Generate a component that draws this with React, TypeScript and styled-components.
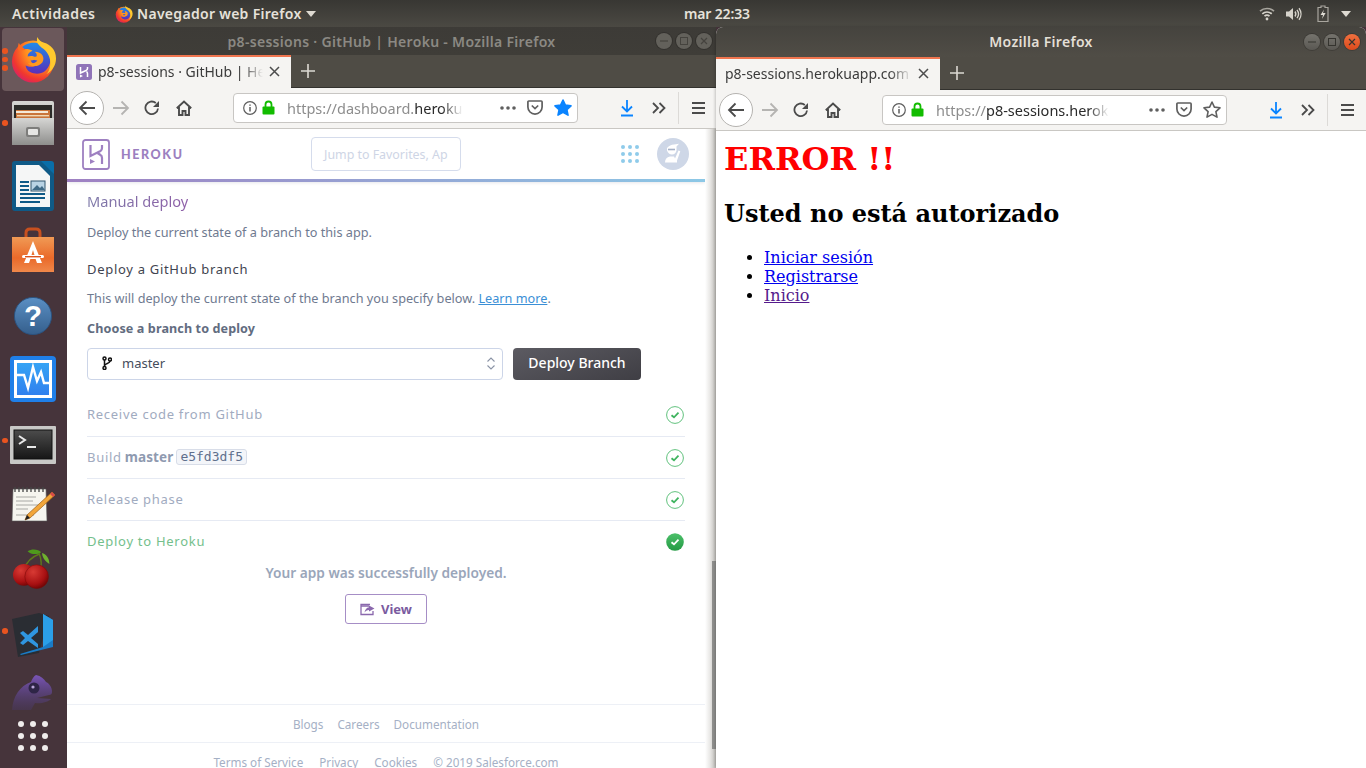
import React from "react";
import styled, { createGlobalStyle } from "styled-components";

const Global = createGlobalStyle`
  html, body { margin: 0; padding: 0; background: #46343b; overflow: hidden; }
  * { box-sizing: border-box; }
`;

const UI = `"Noto Sans", "Open Sans", sans-serif`;
const WEB = `"Noto Sans", "Open Sans", sans-serif`;

const Desktop = styled.div`
  width: 1366px; height: 768px; display: flex; flex-direction: column; overflow: hidden;
  font-family: ${UI}; background: #46343b;
`;
const TopBar = styled.header`
  height: 27px; flex: none; display: grid; grid-template-columns: 684px auto 1fr; align-items: center;
  background: linear-gradient(#383733, #4b4943); color: #e6e2da; font-size: 14px; font-weight: 600;
`;
const TopLeft = styled.div`display: flex; align-items: center; padding-left: 12px;`;
const Activities = styled.span`width: 103px; letter-spacing: .45px;`;
const AppMenu = styled.span`display: flex; align-items: center; gap: 4px; letter-spacing: .3px;`;
const Clock = styled.span`letter-spacing: -.15px;`;
const TopRight = styled.div`display: flex; align-items: center; justify-content: flex-end; padding-right: 15px;`;
const Spacer = styled.span<{ $w: number }>`width: ${p => p.$w}px; flex: none;`;

const Main = styled.div`flex: 1; min-height: 0; display: flex;`;
const Dock = styled.nav`
  width: 67px; flex: none; display: flex; flex-direction: column; background: #46343b; padding-left: 2px;
`;
const DockItem = styled.div<{ $active?: boolean; $dy?: number }>`
  position: relative; width: 62px; height: ${p => (p.$active ? 63 : 63.5)}px; flex: none; display: flex; align-items: center; justify-content: center;
  border-radius: 4px; background: ${p => (p.$active ? "#6b585b" : "transparent")};
  margin-top: ${p => (p.$active ? 1 : 0)}px;
  & > svg { margin-top: ${p => (p.$dy ?? 0) * 2}px; }
`;
const DockGrid = styled(DockItem)`height: 20px; margin-top: 0;`;
const Pips = styled.span`
  position: absolute; left: 0; top: 0; bottom: 0; width: 6px; display: flex; flex-direction: column; align-items: center; justify-content: center; gap: 3px;
`;
const Pip = styled.i`display: block; width: 5.5px; height: 5.5px; border-radius: 50%; background: #e95420;`;

const LeftWindow = styled.section`
  width: 649px; flex: none; display: flex; flex-direction: column; background: #fff; min-height: 0;
`;
const RightWindow = styled.section`
  width: 650px; flex: none; display: flex; flex-direction: column; background: #fff; border-radius: 7px 7px 0 0; overflow: hidden; min-height: 0;
  box-shadow: -1px 0 3px rgba(0,0,0,.2); position: relative;
`;
const TitleBar = styled.div<{ $focused?: boolean }>`
  height: ${p => (p.$focused ? 30 : 28)}px; flex: none; position: relative; display: flex; align-items: center; justify-content: center;
  padding-bottom: ${p => (p.$focused ? 2 : 0)}px;
  background: ${p => (p.$focused ? "linear-gradient(#45433e, #504d46)" : "linear-gradient(#3d3b37, #3f3d38)")};
  color: ${p => (p.$focused ? "#e3dfd6" : "#8b8983")}; font-size: 14px; font-weight: 600; letter-spacing: .3px;
`;
const WinButtons = styled.div<{ $right: number }>`position: absolute; right: ${p => p.$right}px; top: 50%; transform: translateY(-50%); display: flex; gap: 4px;`;
const WinButton = styled.span<{ $close?: boolean; $dim?: boolean }>`
  width: 16px; height: 16px; border-radius: 50%; display: flex; align-items: center; justify-content: center;
  background: ${p => (p.$close ? "linear-gradient(#f0703f, #dc4a1c)" : p.$dim ? "#63615b" : "linear-gradient(#75736d, #5a5853)")};
  box-shadow: 0 0 0 1px rgba(0,0,0,.18);
`;
const TabStrip = styled.div`height: 33px; flex: none; display: flex; align-items: stretch; background: #4f4c45; border-bottom: 1px solid #33322e;`;
const Tab = styled.div`
  width: 224px; flex: none; display: flex; align-items: center; padding: 0 11px 2px 9px; gap: 6px; background: #f5f4f2; border-top: 2px solid #f0754f;
  font-size: 14px; color: #3b3b3b; margin-bottom: -1px;
`;
const TabLabel = styled.span`
  flex: 1; min-width: 0; white-space: nowrap;
  -webkit-mask-image: linear-gradient(90deg, #000 88%, transparent); mask-image: linear-gradient(90deg, #000 88%, transparent);
`;
const NewTab = styled.span`width: 34px; display: flex; align-items: center; justify-content: center;`;
const Toolbar = styled.div`
  height: 41px; flex: none; display: flex; align-items: center; background: #f5f4f2; border-bottom: 1px solid #c9c7c3; position: relative;
`;
const BackButton = styled.span`
  width: 34px; height: 34px; border-radius: 50%; margin-left: 3px; border: 1px solid #b5b3b0; background: #fff; display: flex; align-items: center; justify-content: center; flex: none;
`;
const ToolIcon = styled.span<{ $w: number }>`width: ${p => p.$w}px; flex: none; display: flex; align-items: center; justify-content: center;`;
const UrlBar = styled.div`
  width: 345px; height: 30px; flex: none; margin-left: 31px; margin-top: -1px; display: flex; align-items: center; background: #fff; border: 1px solid #c8c6c3; border-radius: 4px; padding-left: 9px;
`;
const UrlText = styled.span`
  margin-left: 12px; flex: none; white-space: nowrap; font-size: 14.5px; color: #8d8d8d;
  -webkit-mask-image: linear-gradient(90deg, #000 88%, transparent); mask-image: linear-gradient(90deg, #000 88%, transparent);
  b { font-weight: 400; color: #2b2b2b; }
`;
const UrlActions = styled.span`flex: 1; display: flex; align-items: center; justify-content: flex-end; gap: 11px; padding-right: 5px;`;
const ToolEnd = styled.div`flex: 1; display: flex; align-items: center; padding-left: 34px;`;
const Sep = styled.span`width: 1px; height: 32px; background: #dcdad7; margin-left: 2px;`;

const ContentRow = styled.div`flex: 1; min-height: 0; display: flex;`;
const Viewport = styled.div`width: 638px; flex: none; display: flex; flex-direction: column; overflow: hidden; background: #fff; font-family: ${WEB};`;
const ScrollStrip = styled.div`
  width: 11px; flex: none; position: relative; background: linear-gradient(90deg, #fff, #e9e8e6 45%, #bdbbb7);
`;
const ScrollThumb = styled.i`position: absolute; right: 0; top: 432px; width: 4px; height: 188px; background: #8f8f8d;`;

const HerokuHeader = styled.div`
  height: 53px; flex: none; display: flex; align-items: center; padding: 0 16px 0 15px; background: #fff; position: relative;
  border-bottom: 3px solid; border-image: linear-gradient(90deg, #9f80c2, #8cc8e6) 1;
  box-shadow: 0 1px 3px rgba(60,60,90,.12);
`;
const Brand = styled.span`font-family: "Lato", ${WEB}; font-size: 12.5px; font-weight: 900; letter-spacing: 1.6px; color: #9c7fc0; margin-left: 11px; width: 190px;`;
const SearchBox = styled.div`
  width: 150px; height: 34px; border: 1px solid #d5dcec; border-radius: 4px; display: flex; align-items: center; padding: 0 12px; font-size: 12.4px; color: #ced5e5; white-space: nowrap;
`;
const HeaderEnd = styled.div`margin-left: auto; display: flex; align-items: center; gap: 18px;`;
const Section = styled.div`padding: 9px 20px 0; display: flex; flex-direction: column;`;
const SectionTitle = styled.h3`margin: 0; font-size: 14.6px; line-height: 20px; font-weight: 400; background: linear-gradient(90deg, #7d79a8, #8e5fa8); -webkit-background-clip: text; background-clip: text; color: transparent; align-self: flex-start;`;
const Para = styled.p<{ $mt: number }>`margin: ${p => p.$mt}px 0 0; font-size: 12.7px; line-height: 18px; color: #6f7a90;`;
const SubHead = styled.h4`margin: 19px 0 0; font-size: 13px; line-height: 18px; font-weight: 400; color: #3f4450; letter-spacing: .7px;`;
const Label = styled.label`margin-top: 13px; font-size: 12.6px; line-height: 18px; font-weight: 700; color: #626c80; letter-spacing: .1px;`;
const Link = styled.a`color: #3b8fd6; text-decoration: underline;`;
const DeployRow = styled.div`margin-top: 10px; display: flex; gap: 10px;`;
const Select = styled.div`
  width: 416px; height: 32px; display: flex; align-items: center; gap: 10px; padding: 0 6px 2px 14px; border: 1px solid #ccd5e8; border-radius: 4px; font-size: 13px; color: #454d5c; background: #fff;
`;
const SelectValue = styled.span`flex: 1;`;
const DeployButton = styled.button`
  width: 128px; height: 32px; border: 0; border-radius: 4px; background: linear-gradient(160deg, #5c5b62, #3f3e44); color: #fff; font-family: ${WEB}; font-size: 14px; font-weight: 500; padding: 0 0 3px;
`;
const Steps = styled.div`margin-top: 14px; display: flex; flex-direction: column;`;
const Step = styled.div<{ $last?: boolean; $first?: boolean }>`
  height: ${p => (p.$first ? 43 : 42)}px; display: flex; align-items: center; justify-content: space-between; padding-right: 1px;
  border-bottom: ${p => (p.$last ? "none" : "1px solid #e6eaf3")};
`;
const StepLabel = styled.span<{ $green?: boolean }>`
  font-size: 13px; letter-spacing: .72px; display: flex; align-items: center; gap: 3px; margin-top: -2px;
  color: ${p => (p.$green ? "#74c08c" : "#a1abbf")};
  b { font-weight: 700; color: #8f9ab0; letter-spacing: .1px; font-size: 13.5px; }
`;
const Sha = styled.code`
  font-family: "DejaVu Sans Mono", "Liberation Mono", monospace; font-size: 13px; letter-spacing: 0; line-height: 14px; color: #5f6f8c; background: #f3f5f9; border: 1px solid #d8dde8; border-radius: 3px; padding: 0 3px; margin-left: 0;
`;
const Success = styled.div`margin-top: 1px; text-align: center; font-size: 13.7px; line-height: 18px; font-weight: 600; color: #9aa6ba;`;
const ViewWrap = styled.div`margin-top: 12px; display: flex; justify-content: center;`;
const ViewButton = styled.span`
  width: 82px; height: 30px; display: flex; align-items: center; justify-content: center; gap: 6px; border: 1px solid #a68ec6; border-radius: 3px; color: #7a5ba0; font-size: 13px; font-weight: 700;
`;
const FooterRow = styled.div<{ $gap: number; $h: number; $mt?: number }>`
  margin-top: ${p => p.$mt ?? 0}px; height: ${p => p.$h}px; flex: none; display: flex; justify-content: center; align-items: center; gap: ${p => p.$gap}px;
  border-top: 1px solid #edf0f6; font-size: 11.7px; color: #a5b0c5; white-space: nowrap;
`;
const WebPage = styled.div`flex: 1; padding: 9px 8px; font-family: "DejaVu Serif", "Liberation Serif", serif; color: #000; background: #fff;`;
const ErrorTitle = styled.h1`margin: 0; font-size: 32px; line-height: 38px; font-weight: 700; color: #ff0000;`;
const SubTitle = styled.h2`margin: 22px 0 0; font-size: 24px; line-height: 28px; font-weight: 700;`;
const LinkList = styled.ul`margin: 20px 0 0; padding-left: 40px; font-size: 16px; line-height: 19px;`;
const PageLink = styled.a<{ $visited?: boolean }>`color: ${p => (p.$visited ? "#551a8b" : "#0000ee")}; text-decoration: underline;`;

const Firefox = ({ size }: { size: number }) => (
  <svg width={size} height={size} viewBox="0 0 48 48">
    <defs>
      <radialGradient id="ffo" cx="70%" cy="25%" r="85%">
        <stop offset="0" stopColor="#ffd52e" /><stop offset=".45" stopColor="#ff8a1f" /><stop offset=".8" stopColor="#f0382e" /><stop offset="1" stopColor="#d81e6a" />
      </radialGradient>
      <linearGradient id="ffb" x1="0" y1="0" x2="0" y2="1">
        <stop offset="0" stopColor="#1f8ae8" /><stop offset="1" stopColor="#5b2fb8" />
      </linearGradient>
    </defs>
    <circle cx="23.5" cy="26" r="21.5" fill="url(#ffo)" />
    <path d="M10 14C15 7 25 5 32 9c7 4 10 11 9 18-2 9-10 13-17 11-5-1-8-5-8-8 4 2 9 2 12-1-3 0-6-1-7-4 3 0 5-1 6-3-3-2-7-2-9-1 0-3 2-5 5-6-3-2-8-2-13-1z" fill="url(#ffb)" />
    <path d="M25 16c2 1 3 3 2 5l-5 1c1 2 4 3 6 3-2 3-7 4-10 2 3 5 11 5 15 0 3-5 0-11-8-11z" fill="#ff9a1f" />
    <path d="M28 1c-2 6 2 9 6 12 5 4 8 10 7 17-.5 4-2 7-4 9 6-3 10-9 10-16 0-9-6-14-12-16-3-1-6-3-7-6z" fill="#ffc92e" />
    <path d="M9 7c-1 3-1 6 0 8l7-1C13 12 10 10 9 7z" fill="#ff6a1f" />
  </svg>
);

const Caret = ({ x = 10 }: { x?: number }) => (
  <svg width={x} height="6" viewBox="0 0 10 6"><path d="M0 0h10L5 6z" fill="#dedad2" /></svg>
);

const Wifi = () => (
  <svg width="16" height="15" viewBox="0 0 16 15" fill="none" stroke="#d6d3cb" strokeWidth="1.7">
    <path d="M1 5.2c4-3.6 10-3.6 14 0" opacity=".7" /><path d="M3.3 7.8c2.7-2.4 6.7-2.4 9.4 0" /><path d="M5.5 10.2c1.4-1.2 3.6-1.2 5 0" />
    <circle cx="8" cy="13" r="1.4" fill="#d6d3cb" stroke="none" />
  </svg>
);
const Speaker = () => (
  <svg width="16" height="14" viewBox="0 0 16 14" fill="none" stroke="#d6d3cb" strokeWidth="1.4">
    <path d="M0 4.5h3L7 1v12L3 9.5H0z" fill="#d6d3cb" stroke="none" /><path d="M9 4.5c1 1.5 1 3.5 0 5" /><path d="M11 2.8c1.800 2.400 1.800 6 0 8.400" /><path d="M13 1.200c2.600 3.400 2.600 8.200 0 11.600" />
  </svg>
);
const Battery = () => (
  <svg width="12" height="17" viewBox="0 0 12 17" fill="none">
    <path d="M4 1h4v1.500h3v14H1v-14h3z" stroke="#a9a69f" strokeWidth="1.200" /><path d="M7 4.500 3.500 10H6l-1 4 3.600-6H6z" fill="#e0ddd5" />
  </svg>
);

const Cabinet = () => (
  <svg width="44" height="46" viewBox="0 0 44 46">
    <defs><linearGradient id="cab" x1="0" y1="0" x2="0" y2="1"><stop offset="0" stopColor="#d6d6d4" /><stop offset="1" stopColor="#8e8e8c" /></linearGradient></defs>
    <rect x="1" y="1" width="42" height="44" rx="2" fill="url(#cab)" />
    <rect x="3" y="5" width="38" height="13" fill="#2b2a28" />
    <rect x="5" y="10" width="34" height="9" fill="#c9743a" /><rect x="5" y="11" width="32" height="2" fill="#f4e9d8" /><rect x="6" y="15" width="32" height="1.400" fill="#f1d9b5" />
    <rect x="1" y="18" width="42" height="27" fill="url(#cab)" />
    <rect x="15" y="27" width="14" height="10" rx="2" fill="#7d7d7b" /><rect x="17" y="29" width="10" height="6" rx="1" fill="#e6e6e4" />
  </svg>
);
const Writer = () => (
  <svg width="42" height="50" viewBox="0 0 42 50">
    <path d="M3 0h27l12 12v35a3 3 0 0 1-3 3H3a3 3 0 0 1-3-3V3a3 3 0 0 1 3-3z" fill="#0f5a87" />
    <path d="M29 0h10a3 3 0 0 1 3 3v10z" fill="#0a6ea8" />
    <path d="M4 4h23l11 11v31H4z" fill="#f5f6f6" />
    <rect x="19" y="20" width="14" height="10" fill="#b9d3e4" stroke="#33566f" /><path d="M20 29l5-5 3 3 2-2 3 4z" fill="#3f6a86" />
    <path d="M8 21h9M8 25h9M8 29h9M8 33h25M8 37h25M8 41h20" stroke="#0f5a87" strokeWidth="2" />
  </svg>
);
const Store = () => (
  <svg width="44" height="46" viewBox="0 0 44 46">
    <defs><linearGradient id="st" x1="0" y1="0" x2="0" y2="1"><stop offset="0" stopColor="#f09a55" /><stop offset=".6" stopColor="#ea6a2a" /><stop offset="1" stopColor="#f0884a" /></linearGradient></defs>
    <path d="M15 12V6q0-4 4-4h6q4 0 4 4v6" fill="none" stroke="#c8501f" strokeWidth="3" />
    <path d="M1 10h42v35H1z" fill="url(#st)" />
    <path d="M22 14l-9 22h5l1.400-4h5.200l1.400 4h5zM20.500 28l1.500-5 1.500 5z" fill="#fff" />
    <rect x="11" y="28" width="22" height="3" rx="1.500" fill="#fff" /><rect x="14" y="29" width="16" height="1.400" fill="#d9531e" />
  </svg>
);
const Help = () => (
  <svg width="40" height="40" viewBox="0 0 42 42">
    <defs><linearGradient id="hp" x1="0" y1="0" x2="0" y2="1"><stop offset="0" stopColor="#5a8fc4" /><stop offset="1" stopColor="#355f8c" /></linearGradient></defs>
    <circle cx="21" cy="21" r="19.500" fill="url(#hp)" stroke="#2a5280" />
    <text x="21" y="32" textAnchor="middle" fontFamily="Liberation Sans, sans-serif" fontWeight="700" fontSize="31" fill="#fff">?</text>
  </svg>
);
const Monitor = () => (
  <svg width="46" height="46" viewBox="0 0 46 46">
    <rect x="0" y="0" width="46" height="46" rx="4" fill="#1f7fe8" />
    <rect x="4" y="4" width="38" height="38" fill="#fff" />
    <defs><linearGradient id="mo" x1="0" y1="0" x2="0" y2="1"><stop offset="0" stopColor="#36a4f5" /><stop offset="1" stopColor="#2f80ee" /></linearGradient></defs>
    <rect x="7" y="7" width="32" height="32" fill="url(#mo)" />
    <path d="M7 19h7l4 13 5-21 4 14 4-9 3 11h5" fill="none" stroke="#fff" strokeWidth="2.400" />
  </svg>
);
const Terminal = () => (
  <svg width="46" height="38" viewBox="0 0 46 38">
    <rect x="0" y="0" width="46" height="38" rx="1" fill="#c8c8c6" />
    <defs><linearGradient id="te" x1="0" y1="0" x2="0" y2="1"><stop offset="0" stopColor="#4c4c4c" /><stop offset="1" stopColor="#161616" /></linearGradient></defs>
    <rect x="4" y="4" width="38" height="29" fill="url(#te)" stroke="#111" />
    <path d="M9 10l6 4-6 4" fill="none" stroke="#e8e8e8" strokeWidth="2" /><path d="M17 21h9" stroke="#e8e8e8" strokeWidth="2" />
  </svg>
);
const Notepad = () => (
  <svg width="46" height="38" viewBox="0 0 46 38">
    <path d="M3 3h33l1 32H2z" fill="#f6f5ef" stroke="#555" strokeWidth=".6" />
    <path d="M5 1v5M9 1v5M13 1v5M17 1v5M21 1v5M25 1v5M29 1v5M33 1v5" stroke="#444" strokeWidth="1.300" />
    <path d="M6 11h20M6 15h17M6 19h22M6 23h12M6 29h18" stroke="#a8a8a4" strokeWidth="1" />
    <path d="M42 6l3 3-25 23-5 2 2-5z" fill="#f2a63a" stroke="#9a5d16" strokeWidth=".7" /><path d="M42 6l3 3-2 2-3-3z" fill="#d84a4a" />
    <path d="M15 34l2-5 3 3z" fill="#222" />
  </svg>
);
const Cherry = () => (
  <svg width="40" height="43" viewBox="0 0 44 44">
    <defs><radialGradient id="ch" cx="35%" cy="30%" r="75%"><stop offset="0" stopColor="#d83a34" /><stop offset=".7" stopColor="#a81012" /><stop offset="1" stopColor="#6e0505" /></radialGradient></defs>
    <path d="M12 23C15 14 21 9 29 6c2 5 3 11 1 20" fill="none" stroke="#5f7a1a" strokeWidth="1.600" />
    <path d="M16 3c5-3 12-2 15 1-4 3-11 3-15-1z" fill="#4f9a1c" /><path d="M32 5c4 1 8 5 8 12-4-2-8-7-8-12z" fill="#6eb12e" />
    <circle cx="12" cy="29" r="12" fill="url(#ch)" /><circle cx="26" cy="31" r="13" fill="url(#ch)" stroke="#7c0808" strokeWidth=".6" />
  </svg>
);
const VsCode = () => (
  <svg width="42" height="44" viewBox="0 0 42 44">
    <path d="M0 6l27-6 10 3-10 37-21 4z" fill="#2a2d33" />
    <path d="M31 1l10 6v27L9 42l-1-1 23-7z" fill="#1a7cc8" />
    <path d="M31 1v33l10-7V7z" fill="#2b9fe8" />
    <path d="M26 13L16 22l-5-4-3 2 5 5-5 5 3 2 5-4 10 7zM26 19v12l-7-6z" fill="#2f96e0" />
  </svg>
);
const Chameleon = () => (
  <svg width="42" height="36" viewBox="0 0 42 36">
    <defs><linearGradient id="cm" x1="0" y1="0" x2="0" y2="1"><stop offset="0" stopColor="#7a55b8" /><stop offset="1" stopColor="#4a3a6e" stopOpacity=".35" /></linearGradient></defs>
    <path d="M0 36C1 22 8 12 19 8c1-3 3-6 5-7 5 1 8 4 10 7 4 2 6 6 6 10 0 2-1 3-3 3l-12 3 14 1c-3 3-10 5-16 4l-4 7z" fill="url(#cm)" />
    <circle cx="22" cy="14" r="5.500" fill="#2e2546" /><circle cx="21" cy="13" r="1.600" fill="#b9a6d8" />
  </svg>
);
const AppGrid = () => (
  <svg width="32" height="32" viewBox="0 0 32 32" fill="#efeceb">
    {[4, 16, 28].flatMap(y => [4, 16, 28].map(x => <circle key={`${x}-${y}`} cx={x} cy={y} r="3" />))}
  </svg>
);

const HerokuLogo = () => (
  <svg width="28" height="31" viewBox="0 0 28 31">
    <rect x="1" y="1" width="26" height="29" rx="2.500" fill="none" stroke="#9e80c1" strokeWidth="1.800" />
    <path d="M8.500 6v11l10-5c1-.6 1.500-1.600 1.500-3V6" fill="none" stroke="#9e80c1" strokeWidth="2.200" />
    <path d="M20 25v-6c0-1.500-.5-2.500-1.500-3l-3-2" fill="none" stroke="#9e80c1" strokeWidth="2.200" />
    <path d="M8 20l5 2.500L8 25z" fill="#9e80c1" />
  </svg>
);
const HerokuFav = () => (
  <svg width="16" height="16" viewBox="0 0 16 16">
    <rect width="16" height="16" rx="2.500" fill="#9074b8" />
    <path d="M4.500 3v6l5.500-2.500c1-.5 1.500-1.200 1.500-2V3M11.500 13V9.500c0-1-.5-1.500-1-2" fill="none" stroke="#fff" strokeWidth="1.500" />
    <path d="M4 10.500l3 1.500-3 1.500z" fill="#fff" />
  </svg>
);

const stroke = "#4b4b4b";
const Back = () => <svg width="18" height="16" viewBox="0 0 18 16" fill="none" stroke={stroke} strokeWidth="1.800"><path d="M17 8H2M8.500 1.500 2 8l6.500 6.500" /></svg>;
const Forward = () => <svg width="17" height="16" viewBox="0 0 17 16" fill="none" stroke="#b5b4b2" strokeWidth="1.800"><path d="M0 8h15M8.500 1.500 15 8l-6.500 6.500" /></svg>;
const Reload = () => <svg width="16" height="16" viewBox="0 0 16 16" fill="none"><path d="M14 8.500A6.300 6.300 0 1 1 11.800 3" stroke={stroke} strokeWidth="1.800" /><path d="M15 1v6H9z" fill={stroke} /></svg>;
const Home = () => <svg width="16" height="16" viewBox="0 0 16 16" fill="none" stroke={stroke} strokeWidth="1.900"><path d="M.8 8.300 8 1.500l7.200 6.800M3 7v8h3.500v-4h3v4H13V7" /></svg>;
const Info = () => <svg width="14" height="14" viewBox="0 0 14 14" fill="none" stroke="#5d5d5d"><circle cx="7" cy="7" r="6.300" strokeWidth="1.200" /><path d="M7 6v4.500M7 3.400v1.400" strokeWidth="1.500" /></svg>;
const Lock = () => <svg width="13" height="15" viewBox="0 0 13 15"><path d="M3.500 7V4.500a3 3 0 0 1 6 0V7" fill="none" stroke="#12bc00" strokeWidth="1.800" /><rect x="0.500" y="6.500" width="12" height="8" rx="1" fill="#12bc00" /></svg>;
const Dots = () => <svg width="16" height="4" viewBox="0 0 16 4" fill="#5f5f5f"><circle cx="2" cy="2" r="1.800" /><circle cx="8" cy="2" r="1.800" /><circle cx="14" cy="2" r="1.800" /></svg>;
const Pocket = () => <svg width="16" height="15" viewBox="0 0 16 15" fill="none" stroke="#5f5f5f" strokeWidth="1.700"><path d="M1.800 1h12.400c.5 0 .9.400.9.900V7A7 7 0 0 1 .9 7V1.900c0-.5.400-.9.900-.9z" /><path d="M4.800 5.500 8 8.500l3.200-3" /></svg>;
const Star = ({ filled }: { filled?: boolean }) => (
  <svg width="18" height="17" viewBox="0 0 18 17">
    <path d="M9 1l2.400 5.100 5.600.7-4.100 3.800 1.100 5.500L9 13.400 4 16.100l1.100-5.500L1 6.800l5.600-.7z" fill={filled ? "#0a84ff" : "none"} stroke={filled ? "#0a84ff" : "#5f5f5f"} strokeWidth="1.600" strokeLinejoin="round" />
  </svg>
);
const Download = () => <svg width="14" height="17" viewBox="0 0 14 17" fill="none" stroke="#0a84ff" strokeWidth="1.800"><path d="M7 0v11M2 6.500 7 11.500 12 6.500M1 15.500h12" /></svg>;
const More = () => <svg width="14" height="12" viewBox="0 0 14 12" fill="none" stroke={stroke} strokeWidth="1.800"><path d="M1 1l5 5-5 5M7.500 1l5 5-5 5" /></svg>;
const Burger = () => <svg width="13" height="12" viewBox="0 0 13 12" fill="none" stroke={stroke} strokeWidth="1.800"><path d="M0 1h13M0 6h13M0 11h13" /></svg>;
const CloseX = () => <svg width="11" height="11" viewBox="0 0 11 11" fill="none" stroke="#4d4d4d" strokeWidth="1.500"><path d="M1 1l9 9M10 1l-9 9" /></svg>;
const Plus = () => <svg width="14" height="14" viewBox="0 0 14 14" fill="none" stroke="#dcd9d2" strokeWidth="1.600"><path d="M7 0v14M0 7h14" /></svg>;

const WinIcons = ({ focused }: { focused?: boolean }) => {
  const c = focused ? "#35342f" : "#45433e";
  return (
    <WinButtons $right={focused ? 6 : 4}>
      <WinButton $dim={!focused}><svg width="8" height="8" viewBox="0 0 8 8"><path d="M0 4h8" stroke={c} strokeWidth="1.200" /></svg></WinButton>
      <WinButton $dim={!focused}><svg width="8" height="8" viewBox="0 0 8 8"><rect x=".5" y=".5" width="7" height="7" fill="none" stroke={c} /></svg></WinButton>
      <WinButton $close={focused} $dim={!focused}><svg width="8" height="8" viewBox="0 0 8 8"><path d="M1 1l6 6M7 1L1 7" stroke={c} strokeWidth="1.200" /></svg></WinButton>
    </WinButtons>
  );
};

const Chrome = ({ title, tab, fav, url, starred, focused }: { title: string; tab: string; fav?: boolean; url: React.ReactNode; starred?: boolean; focused?: boolean }) => (
  <>
    <TitleBar $focused={focused}>{title}<WinIcons focused={focused} /></TitleBar>
    <TabStrip>
      <Tab>{fav && <HerokuFav />}<TabLabel>{tab}</TabLabel><CloseX /></Tab>
      <NewTab><Plus /></NewTab>
    </TabStrip>
    <Toolbar>
      <BackButton><Back /></BackButton>
      <ToolIcon $w={34}><Forward /></ToolIcon>
      <ToolIcon $w={28}><Reload /></ToolIcon>
      <ToolIcon $w={36}><Home /></ToolIcon>
      <UrlBar>
        <Info /><Spacer $w={5} /><Lock />
        <UrlText>{url}</UrlText>
        <UrlActions><Dots /><Pocket /><Star filled={starred} /></UrlActions>
      </UrlBar>
      <ToolEnd>
        <ToolIcon $w={30}><Download /></ToolIcon>
        <ToolIcon $w={34}><More /></ToolIcon>
        <Sep />
        <ToolIcon $w={38}><Burger /></ToolIcon>
      </ToolEnd>
    </Toolbar>
  </>
);

const Check = () => (
  <svg width="18" height="18" viewBox="0 0 18 18" fill="none">
    <circle cx="9" cy="9" r="8.400" stroke="#62c27e" strokeWidth="1" /><path d="M5.500 9.200 8 11.300l4.500-4.600" stroke="#3fb45f" strokeWidth="1.800" />
  </svg>
);
const CheckSolid = () => (
  <svg width="18" height="18" viewBox="0 0 18 18" fill="none">
    <defs><linearGradient id="cs" x1="0" y1="0" x2="0" y2="1"><stop offset="0" stopColor="#4cc06a" /><stop offset="1" stopColor="#249a44" /></linearGradient></defs>
    <circle cx="9" cy="9" r="8.800" fill="url(#cs)" /><path d="M5.500 9.200 8 11.300l4.500-4.600" stroke="#fff" strokeWidth="1.800" />
  </svg>
);
const Branch = () => (
  <svg width="10" height="14" viewBox="0 0 10 14" fill="none" stroke="#111" strokeWidth="1.500">
    <circle cx="2.500" cy="2.500" r="1.500" /><circle cx="2.500" cy="12" r="1.500" /><circle cx="8" cy="3.500" r="1.500" /><path d="M2.500 4v6.500M8 5c0 3-5.500 2-5.500 5" />
  </svg>
);
const Updown = () => (
  <svg width="10" height="13" viewBox="0 0 10 13" fill="none" stroke="#8a93a5" strokeWidth="1.100"><path d="M1.500 4.500 5 1l3.500 3.500M1.500 8.500 5 12l3.500-3.500" /></svg>
);
const ViewIcon = () => (
  <svg width="15" height="13" viewBox="0 0 15 13" fill="none">
    <path d="M13 8v3.500H1V1.500h9" stroke="#8a68ad" strokeWidth="1.300" /><path d="M1 3h8" stroke="#8a68ad" strokeWidth="1.500" />
    <path d="M9 2.500l5.500 3-5.500 3V7C7 7 5.500 8 4.500 9.500 5 6.500 6.500 4.500 9 4.200z" fill="#8a68ad" />
  </svg>
);
const Apps = () => (
  <svg width="18" height="18" viewBox="0 0 18 18" fill="#8fcbea">
    {[2, 9, 16].flatMap(y => [2, 9, 16].map(x => <circle key={`${x}-${y}`} cx={x} cy={y} r="2" />))}
  </svg>
);
const Avatar = () => (
  <svg width="32" height="32" viewBox="0 0 32 32">
    <circle cx="16" cy="16" r="16" fill="#ced7e7" />
    <path d="M10 10q3-3.500 7-3.500l5-.7-2.500 2.700v4q-1 4-4.500 4t-5-4z" fill="#fff" />
    <path d="M11 11.500h7" stroke="#a4b0c6" strokeWidth="1.600" />
    <path d="M8 24.500q0-5 5-6h4l1 2 3.500-8 1.800.8-3.300 9.200v2z" fill="#fff" />
  </svg>
);

export default function App() {
  return (
    <Desktop>
      <Global />
      <TopBar>
        <TopLeft>
          <Activities>Actividades</Activities>
          <AppMenu><Firefox size={18} />Navegador web Firefox<Caret /></AppMenu>
        </TopLeft>
        <Clock>mar 22:33</Clock>
        <TopRight><Wifi /><Spacer $w={11} /><Speaker /><Spacer $w={15} /><Battery /><Spacer $w={12} /><Caret /></TopRight>
      </TopBar>
      <Main>
        <Dock>
          <DockItem $active><Pips><Pip /><Pip /><Pip /></Pips><Firefox size={47} /></DockItem>
          <DockItem><Pips><Pip /></Pips><Cabinet /></DockItem>
          <DockItem><Writer /></DockItem>
          <DockItem><Store /></DockItem>
          <DockItem $dy={2.5}><Help /></DockItem>
          <DockItem $dy={2}><Monitor /></DockItem>
          <DockItem $dy={4.5}><Pips><Pip /></Pips><Terminal /></DockItem>
          <DockItem $dy={1}><Notepad /></DockItem>
          <DockItem $dy={1.5}><Cherry /></DockItem>
          <DockItem $dy={4}><Pips><Pip /></Pips><VsCode /></DockItem>
          <DockItem $dy={-2.5}><Chameleon /></DockItem>
          <DockGrid><AppGrid /></DockGrid>
        </Dock>
        <LeftWindow>
          <Chrome title="p8-sessions · GitHub | Heroku - Mozilla Firefox" tab="p8-sessions · GitHub | He" fav starred url={<>https://dashboard.<b>heroku</b></>} />
          <ContentRow>
            <Viewport>
              <HerokuHeader>
                <HerokuLogo />
                <Brand>HEROKU</Brand>
                <SearchBox>Jump to Favorites, Ap</SearchBox>
                <HeaderEnd><Apps /><Avatar /></HeaderEnd>
              </HerokuHeader>
              <Section>
                <SectionTitle>Manual deploy</SectionTitle>
                <Para $mt={12}>Deploy the current state of a branch to this app.</Para>
                <SubHead>Deploy a GitHub branch</SubHead>
                <Para $mt={11}>This will deploy the current state of the branch you specify below. <Link>Learn more</Link>.</Para>
                <Label>Choose a branch to deploy</Label>
                <DeployRow>
                  <Select><Branch /><SelectValue>master</SelectValue><Updown /></Select>
                  <DeployButton>Deploy Branch</DeployButton>
                </DeployRow>
                <Steps>
                  <Step $first><StepLabel>Receive code from GitHub</StepLabel><Check /></Step>
                  <Step><StepLabel>Build <b>master</b> <Sha>e5fd3df5</Sha></StepLabel><Check /></Step>
                  <Step><StepLabel>Release phase</StepLabel><Check /></Step>
                  <Step $last><StepLabel $green>Deploy to Heroku</StepLabel><CheckSolid /></Step>
                </Steps>
                <Success>Your app was successfully deployed.</Success>
                <ViewWrap><ViewButton><ViewIcon />View</ViewButton></ViewWrap>
              </Section>
              <FooterRow $gap={14} $h={38} $mt={80}><span>Blogs</span><span>Careers</span><span>Documentation</span></FooterRow>
              <FooterRow $gap={16} $h={38}><span>Terms of Service</span><span>Privacy</span><span>Cookies</span><span>© 2019 Salesforce.com</span></FooterRow>
            </Viewport>
            <ScrollStrip><ScrollThumb /></ScrollStrip>
          </ContentRow>
        </LeftWindow>
        <RightWindow>
          <Chrome focused title="Mozilla Firefox" tab="p8-sessions.herokuapp.com" url={<>https://<b>p8-sessions.herok</b></>} />
          <WebPage>
            <ErrorTitle>ERROR !!</ErrorTitle>
            <SubTitle>Usted no está autorizado</SubTitle>
            <LinkList>
              <li><PageLink>Iniciar sesión</PageLink></li>
              <li><PageLink>Registrarse</PageLink></li>
              <li><PageLink $visited>Inicio</PageLink></li>
            </LinkList>
          </WebPage>
        </RightWindow>
      </Main>
    </Desktop>
  );
}
